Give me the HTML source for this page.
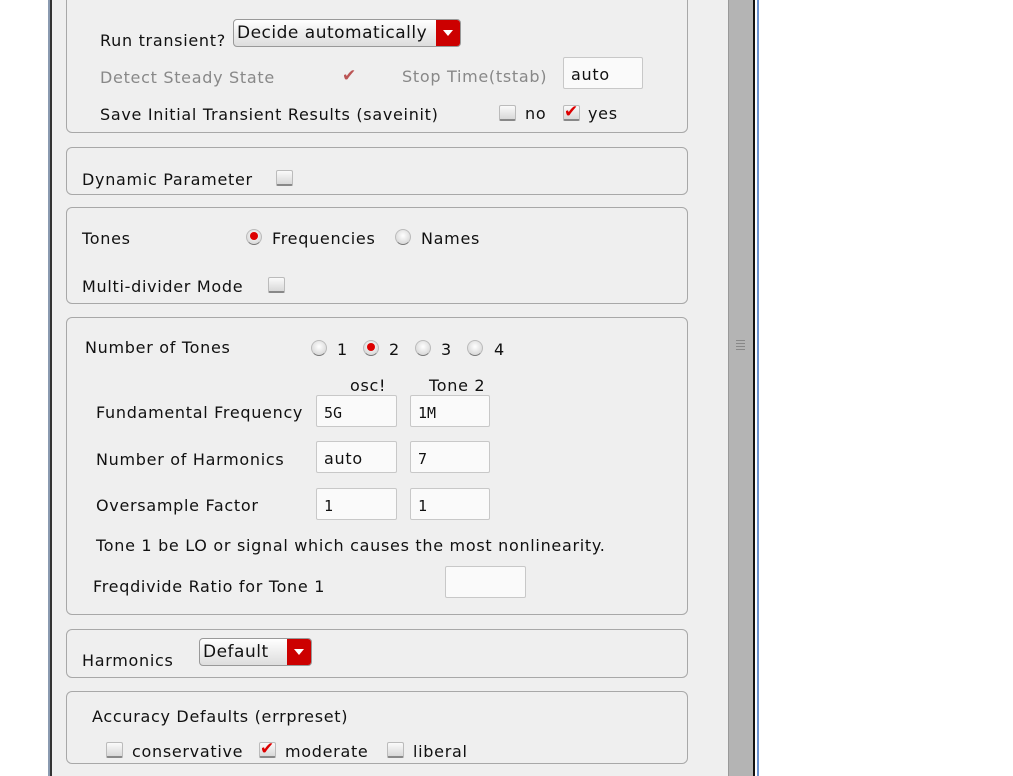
<!DOCTYPE html>
<html><head><style>
body{margin:0;width:1013px;height:776px;background:#fff;position:relative;overflow:hidden;font-family:"DejaVu Sans","Liberation Sans",sans-serif;font-size:16px;letter-spacing:0.7px;color:#111}
.a{position:absolute;white-space:nowrap}
.panel{position:absolute;left:52px;top:0;width:676px;height:776px;background:#efefef}
.grp{position:absolute;left:66px;width:620px;border:1px solid #a8a8a8;border-radius:6px;background:#efefef}
.in{position:absolute;height:32px;background:#fafafa;border:1px solid #c8c8c8;border-radius:2px;font-family:"DejaVu Sans Mono","Liberation Mono",monospace;font-size:15px;letter-spacing:0;line-height:34px;padding-left:7px;box-sizing:border-box}
.cb{position:absolute;width:15px;height:13px;background:linear-gradient(#fafafa,#d8d8d8);border:1px solid #bbb;border-bottom:2px solid #888;border-radius:2px}
.ck{position:absolute;color:#d00;font-size:17px;font-weight:bold;line-height:12px;letter-spacing:0}
.rd{position:absolute;width:14px;height:14px;border-radius:50%;background:radial-gradient(circle at 50% 40%,#fff,#ccc);border:1px solid #bbb;border-bottom-color:#777}
.rd.on::after{content:"";position:absolute;left:3px;top:2px;width:8px;height:8px;border-radius:50%;background:#d00}
.dd{position:absolute;height:28px;border:1px solid #999;border-radius:4px;background:linear-gradient(#fff,#ddd);line-height:26px;padding-left:3px;box-sizing:border-box;font-size:17px;letter-spacing:0.5px}
.dd b{position:absolute;right:0;top:0;bottom:0;width:24px;background:#c00;border-radius:0 3px 3px 0}
.dd b::after{content:"";position:absolute;left:7px;top:10px;border:5px solid transparent;border-top:6px solid #fff}
</style></head><body>
<div class="a" style="left:48px;top:0;width:2px;height:776px;background:#8a9ab0"></div>
<div class="a" style="left:50px;top:0;width:2px;height:776px;background:#333"></div>
<div class="panel"></div>
<div class="a" style="left:728px;top:0;width:25px;height:776px;background:#b4b4b4;border-left:1px solid #999"></div>
<div class="a" style="left:736px;top:340px;width:9px;height:1px;background:#888;box-shadow:0 3px #888,0 6px #888,0 9px #888"></div>
<div class="a" style="left:753px;top:0;width:2px;height:776px;background:#111"></div>
<div class="a" style="left:757px;top:0;width:2px;height:776px;background:#6c93d0"></div>

<div class="grp" style="top:-10px;height:141px"></div>
<div class="a" style="left:100px;top:31px">Run transient?</div>
<div class="dd" style="left:233px;top:19px;width:228px">Decide automatically<b></b></div>
<div class="a" style="left:100px;top:68px;color:#888">Detect Steady State</div>
<div class="ck" style="left:342px;top:70px;color:#b55">✔</div>
<div class="a" style="left:402px;top:67px;color:#888">Stop Time(tstab)</div>
<div class="in" style="left:563px;top:57px;width:80px;font-family:'DejaVu Sans',sans-serif;font-size:16px;letter-spacing:0.7px">auto</div>
<div class="a" style="left:100px;top:105px">Save Initial Transient Results (saveinit)</div>
<div class="cb" style="left:499px;top:105px"></div>
<div class="a" style="left:525px;top:104px">no</div>
<div class="cb" style="left:563px;top:105px"></div><div class="ck" style="left:564px;top:106px">✔</div>
<div class="a" style="left:588px;top:104px">yes</div>

<div class="grp" style="top:147px;height:46px"></div>
<div class="a" style="left:82px;top:170px">Dynamic Parameter</div>
<div class="cb" style="left:276px;top:170px"></div>

<div class="grp" style="top:207px;height:95px"></div>
<div class="a" style="left:82px;top:229px">Tones</div>
<div class="rd on" style="left:246px;top:229px"></div>
<div class="a" style="left:272px;top:229px">Frequencies</div>
<div class="rd" style="left:395px;top:229px"></div>
<div class="a" style="left:421px;top:229px">Names</div>
<div class="a" style="left:82px;top:277px">Multi-divider Mode</div>
<div class="cb" style="left:268px;top:277px"></div>

<div class="grp" style="top:317px;height:296px"></div>
<div class="a" style="left:85px;top:338px">Number of Tones</div>
<div class="rd" style="left:311px;top:340px"></div><div class="a" style="left:337px;top:340px">1</div>
<div class="rd on" style="left:363px;top:340px"></div><div class="a" style="left:389px;top:340px">2</div>
<div class="rd" style="left:415px;top:340px"></div><div class="a" style="left:441px;top:340px">3</div>
<div class="rd" style="left:467px;top:340px"></div><div class="a" style="left:494px;top:340px">4</div>
<div class="a" style="left:350px;top:376px">osc!</div>
<div class="a" style="left:429px;top:376px">Tone 2</div>
<div class="a" style="left:96px;top:403px">Fundamental Frequency</div>
<div class="in" style="left:316px;top:395px;width:81px">5G</div>
<div class="in" style="left:410px;top:395px;width:80px">1M</div>
<div class="a" style="left:96px;top:450px">Number of Harmonics</div>
<div class="in" style="left:316px;top:441px;width:81px;font-family:'DejaVu Sans',sans-serif;font-size:16px;letter-spacing:0.7px">auto</div>
<div class="in" style="left:410px;top:441px;width:80px">7</div>
<div class="a" style="left:96px;top:496px">Oversample Factor</div>
<div class="in" style="left:316px;top:488px;width:81px">1</div>
<div class="in" style="left:410px;top:488px;width:80px">1</div>
<div class="a" style="left:96px;top:536px">Tone 1 be LO or signal which causes the most nonlinearity.</div>
<div class="a" style="left:93px;top:577px">Freqdivide Ratio for Tone 1</div>
<div class="in" style="left:445px;top:566px;width:81px"></div>

<div class="grp" style="top:629px;height:47px"></div>
<div class="a" style="left:82px;top:651px">Harmonics</div>
<div class="dd" style="left:199px;top:638px;width:113px">Default<b></b></div>

<div class="grp" style="top:691px;height:71px"></div>
<div class="a" style="left:92px;top:707px">Accuracy Defaults (errpreset)</div>
<div class="cb" style="left:106px;top:742px"></div>
<div class="a" style="left:132px;top:742px">conservative</div>
<div class="cb" style="left:259px;top:742px"></div><div class="ck" style="left:260px;top:743px">✔</div>
<div class="a" style="left:285px;top:742px">moderate</div>
<div class="cb" style="left:387px;top:742px"></div>
<div class="a" style="left:413px;top:742px">liberal</div>
</body></html>
